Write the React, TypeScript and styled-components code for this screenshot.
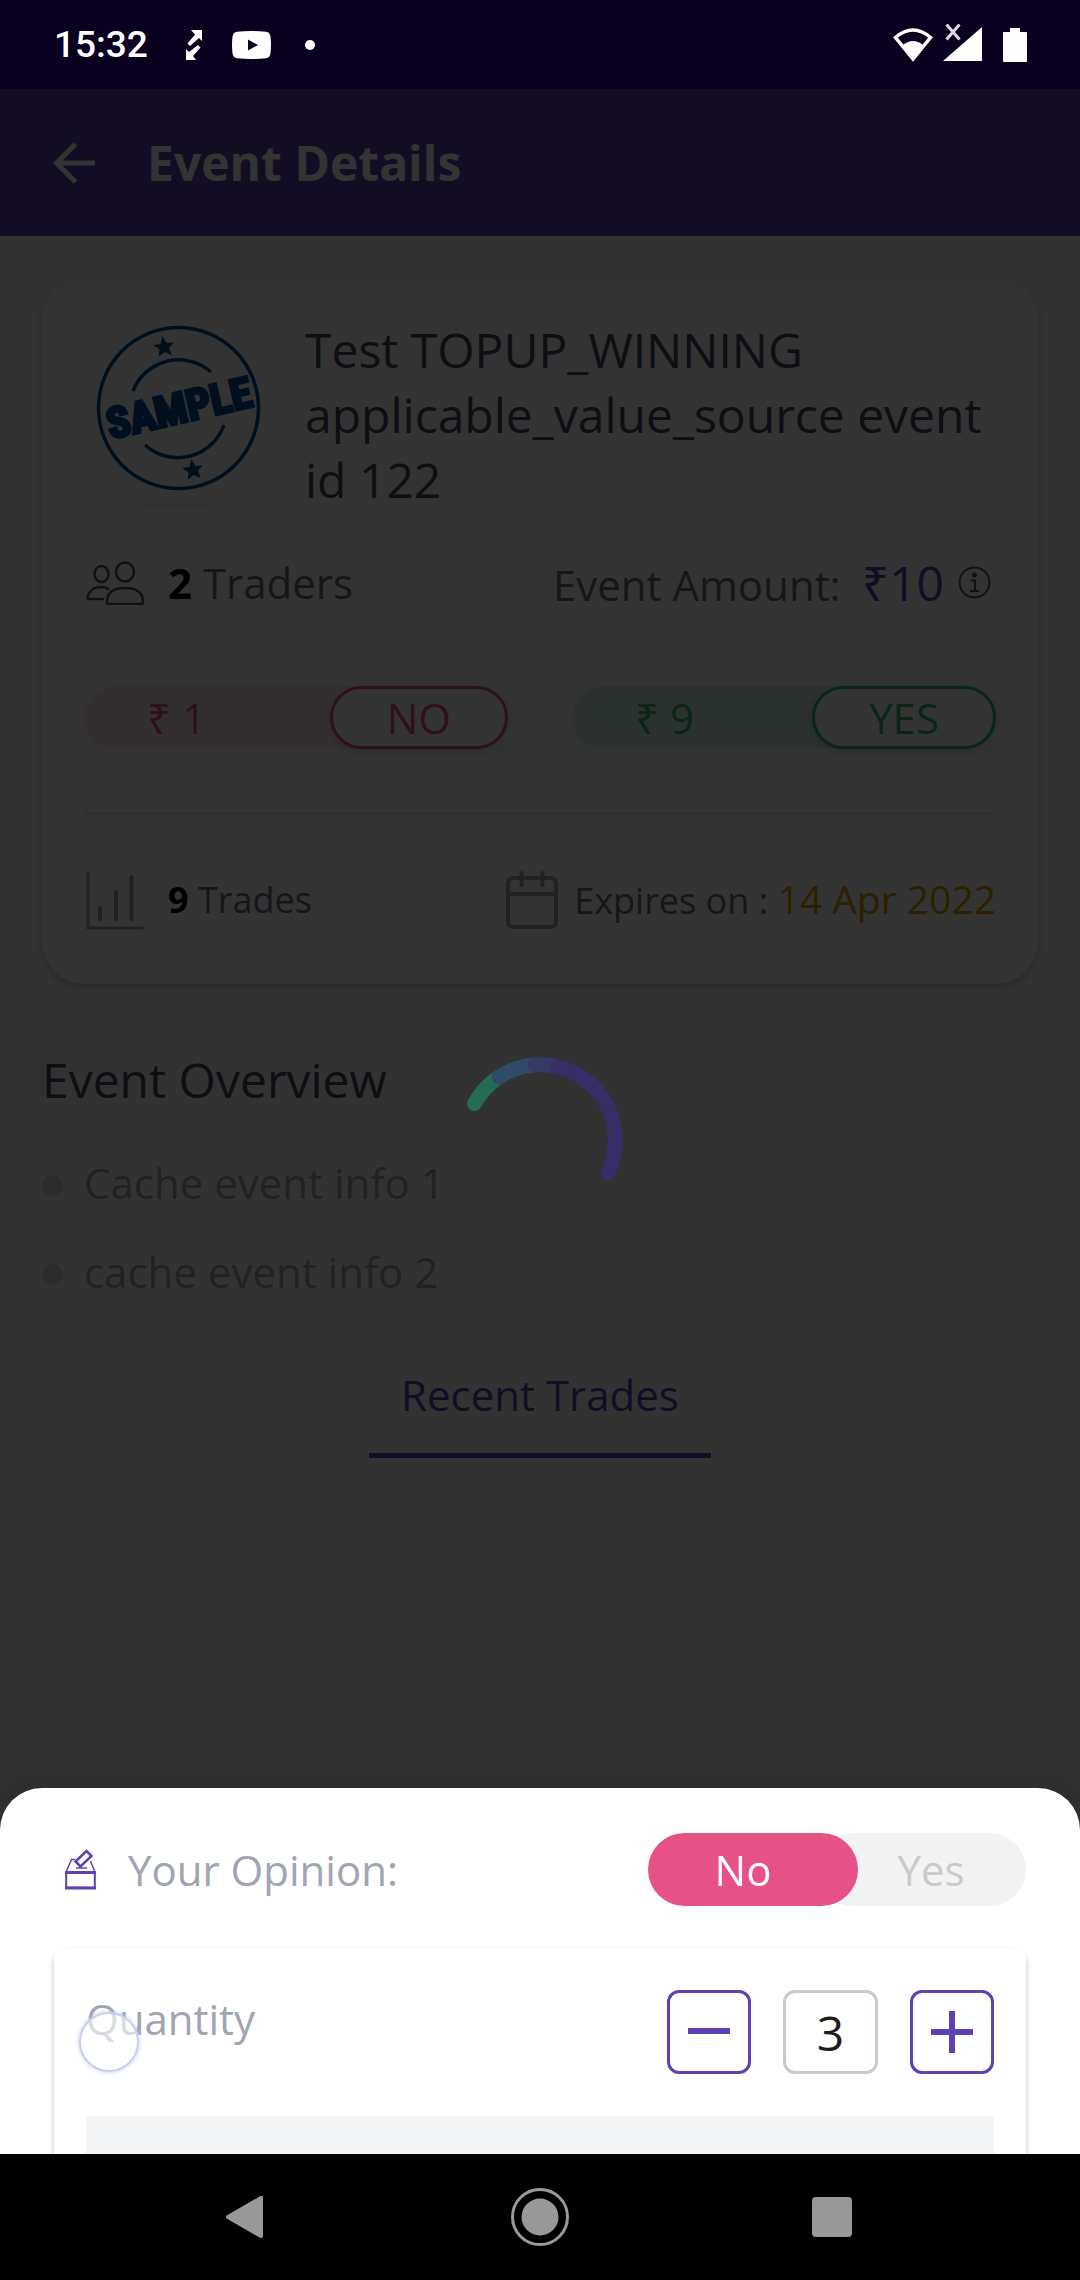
import React, { useState } from "react";
import styled, { createGlobalStyle } from "styled-components";

const sans = '"Open Sans", "Noto Sans", sans-serif';
const purple = "#5f41b2";

const GlobalStyle = createGlobalStyle`
  *, *::before, *::after { box-sizing: border-box; }
  body { margin: 0; background: #fafafa; font-family: ${sans}; }
  h1, h2, p, ul { margin: 0; padding: 0; }
  button, input { font: inherit; color: inherit; margin: 0; padding: 0; }
  button { background: none; border: 0; cursor: pointer; }
  svg { display: block; flex: none; }
`;

const Screen = styled.div`
  min-height: 100vh;
  display: flex;
  flex-direction: column;
`;

const StatusBar = styled.div`
  height: 89px;
  padding: 0 53px 0 54px;
  display: flex;
  align-items: center;
  background: #0a0020;
  color: #fff;
`;

const Clock = styled.time`
  font: 500 37px/44px Roboto, sans-serif;
  margin-right: 38px;
`;

const StatusGroup = styled.div<{ $gap: number }>`
  display: flex;
  align-items: center;
  gap: ${(p) => p.$gap}px;
`;

const Spacer = styled.div`
  flex: 1;
`;

const Stage = styled.div`
  position: relative;
  flex: 1;
  display: flex;
  flex-direction: column;
  overflow: hidden;
  background: #f8f8f8;
`;

const AppBar = styled.header`
  height: 147px;
  padding: 0 52px;
  display: flex;
  align-items: center;
  gap: 51px;
  background: ${purple};
  color: #fff;
`;

const AppTitle = styled.h1`
  font-size: 48px;
  line-height: 65px;
  font-weight: 700;
`;

const PageBody = styled.main`
  padding: 41px 42px 0;
  background: #fbfbfb;
`;

const EventCard = styled.section`
  padding: 40px 42px 54px;
  border-radius: 42px;
  background: #fff;
  box-shadow: 0 3px 8px rgba(0, 0, 0, 0.25);
`;

const EventHead = styled.div`
  display: flex;
  align-items: flex-start;
  gap: 32px;
`;

const EventTitle = styled.h2`
  flex: 1;
  font-size: 48px;
  line-height: 65px;
  font-weight: 400;
  color: #45455f;
`;

const SplitRow = styled.div<{ $top: number }>`
  margin-top: ${(p) => p.$top}px;
  display: flex;
  align-items: center;
  justify-content: space-between;
`;

const Stat = styled.div<{ $gap: number }>`
  display: flex;
  align-items: center;
  gap: ${(p) => p.$gap}px;
`;

const StatText = styled.p<{ $size: number }>`
  font-size: ${(p) => p.$size}px;
  line-height: 58px;
  color: #6b6f80;

  strong {
    color: #000;
  }
`;

const Amount = styled.span`
  font-size: 48px;
  line-height: 65px;
  color: ${purple};
`;

const AmountText = styled.p`
  display: flex;
  align-items: baseline;
  gap: 21px;
  font-size: 42px;
  line-height: 58px;
  color: #6b6f80;
`;

const ExpiryDate = styled.span`
  font-size: 39px;
  color: #d79b00;
`;

const IconButton = styled.button`
  display: grid;
  place-items: center;
  min-width: 44px;
  min-height: 44px;
`;

const Offers = styled.div`
  margin-top: 71px;
  display: grid;
  grid-template-columns: 1fr 1fr;
  gap: 64px;
`;

const Offer = styled.div<{ $tint: string; $tone: string }>`
  display: flex;
  justify-content: space-between;
  align-items: center;
  height: 63px;
  padding-left: 63px;
  border-radius: 32px;
  background: ${(p) => p.$tint};
  color: ${(p) => p.$tone};
  font-size: 42px;
  line-height: 57px;
`;

const OfferButton = styled.button`
  height: 63px;
  padding: 0 54px;
  border: 3px solid currentColor;
  border-radius: 32px;
  background: #fff;
  box-shadow: 0 2px 8px rgba(0, 0, 0, 0.2);
`;

const Divider = styled.hr`
  height: 3px;
  margin: 63px 0 0;
  border: 0;
  background: #ebebeb;
`;

const SectionTitle = styled.h2`
  margin-top: 63px;
  font-size: 48px;
  line-height: 65px;
  font-weight: 400;
  color: #45455f;
`;

const InfoList = styled.ul`
  margin-top: 42px;
  display: flex;
  flex-direction: column;
  gap: 32px;
  list-style: none;
`;

const InfoItem = styled.li`
  display: flex;
  align-items: flex-start;
  gap: 21px;
  font-size: 42px;
  line-height: 57px;
  color: #a0a5a6;

  &::before {
    content: "";
    width: 21px;
    height: 21px;
    margin-top: 21px;
    border-radius: 50%;
    background: #d2d6dc;
  }
`;

const Tabs = styled.div`
  margin-top: 50px;
  display: flex;
  justify-content: center;
`;

const Tab = styled.button`
  padding: 16px 32px 30px;
  border-bottom: 5px solid ${purple};
  font-size: 42px;
  line-height: 57px;
  color: ${purple};
`;

const Scrim = styled.div`
  position: absolute;
  inset: 0;
  background: rgba(0, 0, 0, 0.8);
`;

const LoaderLayer = styled.div`
  position: fixed;
  inset: 0;
  display: grid;
  place-items: center;
  pointer-events: none;
`;

const Sheet = styled.section`
  position: absolute;
  left: 0;
  right: 0;
  bottom: 0;
  padding: 45px 54px 0;
  border-radius: 42px 42px 0 0;
  background: #fff;
  box-shadow: 0 -4px 24px rgba(0, 0, 0, 0.15);
  overflow: hidden;
`;

const SheetHead = styled.div`
  display: flex;
  align-items: center;
  gap: 32px;
  padding-left: 11px;
`;

const SheetLabel = styled.span`
  flex: 1;
  font-size: 42px;
  line-height: 57px;
  color: #9fa5b3;
`;

const Toggle = styled.div`
  display: flex;
`;

const Option = styled.label<{ $side: "left" | "right"; $on: boolean }>`
  position: relative;
  z-index: ${(p) => (p.$on ? 1 : 0)};
  display: flex;
  align-items: center;
  justify-content: center;
  width: 210px;
  height: 73px;
  margin-left: ${(p) => (p.$side === "right" ? -42 : 0)}px;
  padding: ${(p) => (p.$side === "right" ? "0 0 0 20px" : "0 20px 0 0")};
  border-radius: 37px;
  background: ${(p) => (p.$on ? "#e65287" : "#f3f3f3")};
  color: ${(p) => (p.$on ? "#fff" : "#cacaca")};
  font-size: 42px;
  line-height: 57px;
  cursor: pointer;
`;

const HiddenRadio = styled.input`
  position: absolute;
  inset: 0;
  width: 100%;
  height: 100%;
  opacity: 0;
  cursor: pointer;
`;

const QuantityCard = styled.div`
  margin-top: 42px;
  padding: 42px 32px 0;
  border-radius: 12px 12px 0 0;
  box-shadow: 0 4px 6px rgba(0, 0, 0, 0.24);
`;

const QuantityRow = styled.div`
  display: flex;
  align-items: flex-start;
  justify-content: space-between;
`;

const QuantityLabel = styled.label`
  position: relative;
  font-size: 42px;
  line-height: 57px;
  color: #9fa5b3;
`;

const TouchDot = styled.span`
  position: absolute;
  left: -7px;
  top: 22px;
  width: 60px;
  height: 60px;
  border-radius: 50%;
  border: 2px solid #c8ceee;
  background: rgba(255, 255, 255, 0.6);
  box-shadow: 0 0 4px #c3c9ea;
`;

const Stepper = styled.div`
  display: flex;
  gap: 32px;
`;

const StepButton = styled.button`
  display: grid;
  place-items: center;
  width: 84px;
  height: 84px;
  border: 3px solid ${purple};
  border-radius: 12px;
`;

const QuantityInput = styled.input`
  width: 95px;
  height: 84px;
  border: 3px solid #c7cad2;
  border-radius: 12px;
  background: #fff;
  font-size: 48px;
  line-height: 65px;
  text-align: center;
  color: #1c1c1c;
`;

const PricePanel = styled.div`
  height: 38px;
  margin-top: 42px;
  background: #f4f5f7;
`;

const NavBar = styled.nav`
  height: 126px;
  padding: 0 197px;
  display: flex;
  align-items: center;
  justify-content: space-between;
  background: #000;
  color: #999;
`;

const NavButton = styled.button`
  display: grid;
  place-items: center;
  width: 102px;
  height: 102px;
`;

const SyncIcon = () => (
  <svg width="16" height="30" viewBox="0 0 16 30" fill="#fff">
    <path d="M5 0H16V11L13 8L4 16L1.500 13.500L9 4.500Z" />
    <path d="M0 19L3 22L12 15L14.500 17.500L7 26L10 30H0Z" />
  </svg>
);

const VideoIcon = () => (
  <svg width="39" height="28" viewBox="0 0 39 28">
    <path d="M5 .700Q19.500-.700 34 .700q4 .600 4.500 5 1 8 0 16.500-.5 4.500-4.500 5.100-14.500 1.400-29 0-4-.600-4.500-5.100-1-8.500 0-16.500Q1 1.300 5 .700z" fill="#fff" />
    <path d="M16 8.500v11l10-5.500z" fill="#0a0020" />
  </svg>
);

const DotIcon = () => (
  <svg width="18" height="10" viewBox="0 0 18 10">
    <circle cx="9" cy="5" r="5" fill="#fff" />
  </svg>
);

const WifiIcon = () => (
  <svg width="40" height="34" viewBox="0 0 40 34">
    <path d="M2.500 9.500Q20-5.500 37.500 9.500L20 31z" fill="none" stroke="#fff" strokeWidth="3.500" />
    <path d="M10 17q10-8 20 0L20 32z" fill="#fff" />
  </svg>
);

const SignalIcon = () => (
  <svg width="39" height="41" viewBox="0 0 39 41">
    <path d="M39 3v34H0z" fill="#fff" />
    <path d="M3.500 .500l13 15M16.500 .500l-13 15" stroke="#ddd9ea" strokeWidth="3" />
  </svg>
);

const BatteryIcon = () => (
  <svg width="24" height="34" viewBox="0 0 24 34">
    <path d="M7 0h10v4h6q1 0 1 1v28q0 1-1 1H1q-1 0-1-1V5q0-1 1-1h6z" fill="#fff" />
  </svg>
);

const BackIcon = () => (
  <svg width="42" height="42" viewBox="0 0 42 42" fill="none" stroke="currentColor" strokeWidth="5">
    <path d="M42 21H4M22.500 2L3.500 21l19 19" />
  </svg>
);

const stampInk = "#004a98";

const Star = ({ x, y, turn }: { x: number; y: number; turn: number }) => (
  <path
    transform={`translate(${x} ${y}) rotate(${turn})`}
    d="M0-11L3-3.500 10.500-3.400 4.800 1.500 6.500 9 0 5-6.500 9-4.800 1.500-10.500-3.400-3-3.500z"
    fill={stampInk}
  />
);

const SampleStamp = () => (
  <svg width="189" height="189" viewBox="0 0 189 189" role="img" aria-label="Sample stamp">
    <g fill="none" stroke={stampInk} strokeWidth="3.500">
      <ellipse cx="94.500" cy="91" rx="80" ry="80.500" />
      <path d="M49 74A49 49 0 0 1 127 55M61 128A49 49 0 0 0 140 108" />
    </g>
    <Star x={80} y={30} turn={-8} />
    <Star x={109} y={153} turn={-8} />
    <text
      transform="translate(95 91) rotate(-13)"
      textAnchor="middle"
      y="15"
      fontFamily="'Liberation Sans Narrow', 'Roboto Condensed', 'Open Sans Condensed', 'DejaVu Sans Condensed', sans-serif"
      fontWeight="700"
      fontSize="43"
      fill={stampInk}
      stroke={stampInk}
      strokeWidth="3"
    >
      SAMPLE
    </text>
    <path d="M60 188h66" stroke="#eee" strokeWidth="2" />
  </svg>
);

const TradersIcon = () => (
  <svg width="60" height="44" viewBox="-2 0 60 44" fill="none" stroke="#55586a" strokeWidth="2.500">
    <ellipse cx="15.500" cy="13" rx="7" ry="8" />
    <ellipse cx="39" cy="11" rx="9" ry="9.500" />
    <path d="M18 38H3q-2 0-1.500-2Q4 26 15 26q5 0 8 2.500" />
    <path d="M21 41q0-14 18-14t18 14q0 2-2 2H23q-2 0-2-2z" />
  </svg>
);

const InfoIcon = () => (
  <svg width="33" height="33" viewBox="0 0 33 33" fill="none" stroke="#55586a" strokeWidth="2">
    <circle cx="16.500" cy="16.500" r="15" />
    <circle cx="16.500" cy="9" r="2.500" fill="#55586a" stroke="none" />
    <path d="M13 14.500h4v10.500M12 25h9" />
  </svg>
);

const ChartIcon = () => (
  <svg width="60" height="60" viewBox="0 0 60 60" fill="none" stroke="#a0a0a0" strokeWidth="4" strokeLinecap="round" strokeLinejoin="round">
    <path d="M4 3v55h54" strokeWidth="3" />
    <path d="M16 38v11M32 22v27M47.500 7v42" />
  </svg>
);

const CalendarIcon = () => (
  <svg width="52" height="58" viewBox="0 0 52 58" fill="none" stroke="#a0a5a8" strokeWidth="4" strokeLinecap="round">
    <rect x="2" y="7" width="48" height="49" rx="5" />
    <path d="M2 23h48M15.500 2v12M36.500 2v12" />
  </svg>
);

const BallotIcon = () => (
  <svg width="31" height="41" viewBox="0 0 31 41" fill="none" stroke={purple} strokeWidth="2">
    <path d="M1.200 23V38.700H29.800V23" strokeWidth="2" />
    <path d="M0 23.500H31M0 39H31" strokeWidth="3" />
    <path d="M1.500 22L6.500 10.500H10M29.500 22L25.500 12M11 19h11" strokeWidth="1.500" />
    <path d="M10.500 12.500L21.500 2L26.500 7L15.500 17.500Z" strokeWidth="2.500" />
  </svg>
);

const Loader = () => (
  <svg width="166" height="166" viewBox="-83 -83 166 166" fill="none" strokeWidth="15" strokeLinecap="round" role="img" aria-label="Loading">
    <path d="M-65.500-36.500A75 75 0 0 1-41-63" stroke="#266b54" />
    <path d="M-41-63A75 75 0 0 1-5-75" stroke="#304a68" />
    <path d="M-5-75A75 75 0 0 1 18-73" stroke="#353a67" />
    <path d="M18-73A75 75 0 0 1 68 32" stroke="#392e66" />
  </svg>
);

export default function App() {
  const [opinion, setOpinion] = useState("No");
  const [quantity, setQuantity] = useState(3);

  return (
    <>
      <GlobalStyle />
      <Screen>
        <StatusBar>
          <Clock>15:32</Clock>
          <StatusGroup $gap={30}>
            <SyncIcon />
            <VideoIcon />
            <DotIcon />
          </StatusGroup>
          <Spacer />
          <StatusGroup $gap={10}>
            <WifiIcon />
            <StatusGroup $gap={21}>
              <SignalIcon />
              <BatteryIcon />
            </StatusGroup>
          </StatusGroup>
        </StatusBar>

        <Stage>
          <AppBar>
            <IconButton aria-label="Back">
              <BackIcon />
            </IconButton>
            <AppTitle>Event Details</AppTitle>
          </AppBar>

          <PageBody>
            <EventCard>
              <EventHead>
                <SampleStamp />
                <EventTitle>Test TOPUP_WINNING applicable_value_source event id 122</EventTitle>
              </EventHead>

              <SplitRow $top={38}>
                <Stat $gap={24}>
                  <TradersIcon />
                  <StatText $size={42}>
                    <strong>2</strong> Traders
                  </StatText>
                </Stat>
                <Stat $gap={8}>
                  <AmountText>
                    Event Amount: <Amount>₹10</Amount>
                  </AmountText>
                  <IconButton aria-label="About the event amount">
                    <InfoIcon />
                  </IconButton>
                </Stat>
              </SplitRow>

              <Offers>
                <Offer $tint="#ffecf0" $tone="#e65287">
                  ₹ 1<OfferButton>NO</OfferButton>
                </Offer>
                <Offer $tint="#d8f4e5" $tone="#34b878">
                  ₹ 9<OfferButton>YES</OfferButton>
                </Offer>
              </Offers>

              <Divider />

              <SplitRow $top={55}>
                <Stat $gap={24}>
                  <ChartIcon />
                  <StatText $size={36}>
                    <strong>9</strong> Trades
                  </StatText>
                </Stat>
                <Stat $gap={16}>
                  <CalendarIcon />
                  <StatText $size={36}>
                    Expires on : <ExpiryDate>14 Apr 2022</ExpiryDate>
                  </StatText>
                </Stat>
              </SplitRow>
            </EventCard>

            <SectionTitle>Event Overview</SectionTitle>
            <InfoList>
              <InfoItem>Cache event info 1</InfoItem>
              <InfoItem>cache event info 2</InfoItem>
            </InfoList>

            <Tabs role="tablist">
              <Tab role="tab" aria-selected="true">
                Recent Trades
              </Tab>
            </Tabs>
          </PageBody>

          <Scrim />

          <Sheet>
            <SheetHead>
              <BallotIcon />
              <SheetLabel id="opinion-label">Your Opinion:</SheetLabel>
              <Toggle role="radiogroup" aria-labelledby="opinion-label">
                <Option $side="left" $on={opinion === "No"}>
                  <HiddenRadio type="radio" name="opinion" checked={opinion === "No"} onChange={() => setOpinion("No")} />
                  No
                </Option>
                <Option $side="right" $on={opinion === "Yes"}>
                  <HiddenRadio type="radio" name="opinion" checked={opinion === "Yes"} onChange={() => setOpinion("Yes")} />
                  Yes
                </Option>
              </Toggle>
            </SheetHead>

            <QuantityCard>
              <QuantityRow>
                <QuantityLabel htmlFor="quantity">
                  Quantity
                  <TouchDot />
                </QuantityLabel>
                <Stepper>
                  <StepButton aria-label="Decrease quantity" onClick={() => setQuantity(Math.max(1, quantity - 1))}>
                    <svg width="42" height="42" viewBox="0 0 42 42" stroke={purple} strokeWidth="6">
                      <path d="M0 20h42" />
                    </svg>
                  </StepButton>
                  <QuantityInput
                    id="quantity"
                    inputMode="numeric"
                    value={quantity}
                    onChange={(e) => setQuantity(Number(e.target.value) || 1)}
                  />
                  <StepButton aria-label="Increase quantity" onClick={() => setQuantity(quantity + 1)}>
                    <svg width="42" height="42" viewBox="0 0 42 42" stroke={purple} strokeWidth="6">
                      <path d="M0 21h42M21 0v42" />
                    </svg>
                  </StepButton>
                </Stepper>
              </QuantityRow>
              <PricePanel />
            </QuantityCard>
          </Sheet>
        </Stage>

        <NavBar>
          <NavButton aria-label="Back">
            <svg width="46" height="42" viewBox="0 0 46 42">
              <path d="M36 2v38L3 21z" fill="#999" stroke="#999" strokeWidth="4" strokeLinejoin="round" />
            </svg>
          </NavButton>
          <NavButton aria-label="Home">
            <svg width="60" height="60" viewBox="0 0 60 60">
              <circle cx="30" cy="30" r="27.500" fill="none" stroke="#999" strokeWidth="3" />
              <circle cx="30" cy="30" r="18.500" fill="#999" />
            </svg>
          </NavButton>
          <NavButton aria-label="Recent apps">
            <svg width="40" height="40" viewBox="0 0 40 40">
              <rect width="40" height="40" rx="4" fill="#999" />
            </svg>
          </NavButton>
        </NavBar>
      </Screen>
      <LoaderLayer>
        <Loader />
      </LoaderLayer>
    </>
  );
}
